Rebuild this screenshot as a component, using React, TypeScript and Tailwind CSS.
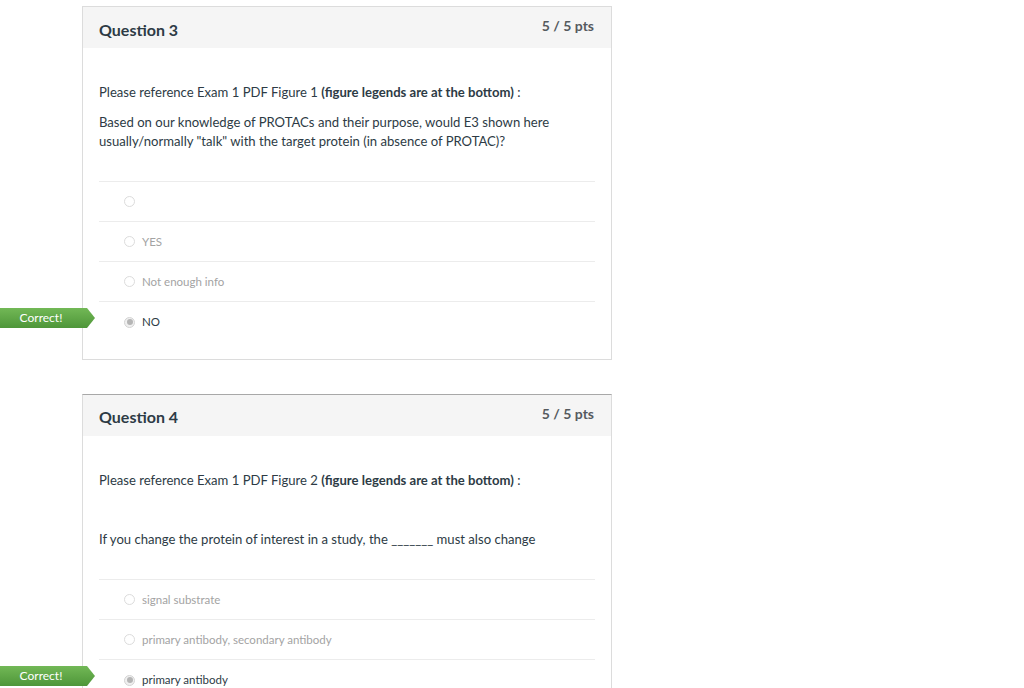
import React from "react";

type Opt = { label: string; selected?: boolean };

function Radio({ selected }: { selected?: boolean }) {
  if (selected) {
    return (
      <span className="flex h-[11px] w-[11px] items-center justify-center rounded-full border border-[#d4d4d4] bg-[#f0f0f0]">
        <span className="h-[6px] w-[6px] rounded-full bg-[#b5b5b5]" />
      </span>
    );
  }
  return <span className="h-[11px] w-[11px] rounded-full border border-[#dcdcdc] bg-white" />;
}

function Badge() {
  return (
    <div className="absolute left-[-99px] top-[6px] flex h-[20px] w-[95px] items-center bg-gradient-to-b from-[#72b856] to-[#4e9639] [clip-path:polygon(0_0,87px_0,100%_50%,87px_100%,0_100%)]">
      <span className="w-[82px] text-center text-[12px] leading-none text-white">Correct!</span>
    </div>
  );
}

function Card({
  title,
  darkTop,
  children,
  options,
}: {
  title: string;
  darkTop?: boolean;
  children: React.ReactNode;
  options: Opt[];
}) {
  return (
    <div
      className={`w-[530px] border border-[#dcdcdc] bg-white ${darkTop ? "border-t-[#a8a8a8]" : ""}`}
    >
      <div className="flex h-[41px] items-start justify-between bg-[#f5f5f5] pl-4 pr-[17px]">
        <div
          className={`${darkTop ? "pt-[12px]" : "pt-[13px]"} text-[16px] font-bold leading-[20px] text-[#2d3b45]`}
        >
          {title}
        </div>
        <div className="pt-[9px] text-[14px] font-bold leading-[20px] text-[#555a5e]">5 / 5 pts</div>
      </div>
      <div className="px-4 pt-[35px] text-[13.1px] leading-[19px] text-[#2d3b45]">{children}</div>
      <div className="mx-[16px] mt-[30px] pb-[17px]">
        {options.map((o, i) => (
          <div
            key={i}
            className={`relative flex items-center gap-[7px] border-t border-[#ececec] pl-[25px] text-[11.5px] ${
              i === options.length - 1 ? "h-[41px]" : "h-10"
            }`}
          >
            {o.selected && <Badge />}
            <Radio selected={o.selected} />
            <span className={o.selected ? "text-[#2d3b45]" : "text-[#a3a3a3]"}>{o.label}</span>
          </div>
        ))}
      </div>
    </div>
  );
}

export default function App() {
  return (
    <div
      className="relative min-h-[688px] w-[1024px] overflow-hidden bg-white pl-[82px] pt-[6px]"
      style={{ fontFamily: "Lato, 'Liberation Sans', sans-serif" }}
    >
      <Card
        title="Question 3"
        options={[
          { label: "" },
          { label: "YES" },
          { label: "Not enough info" },
          { label: "NO", selected: true },
        ]}
      >
        <p>
          Please reference Exam 1 PDF Figure 1 <b>(figure legends are at the bottom)</b> :
        </p>
        <p className="mt-[11px] w-[470px]">
          Based on our knowledge of PROTACs and their purpose, would E3 shown here usually/normally "talk"
          with the target protein (in absence of PROTAC)?
        </p>
      </Card>
      <div className="h-[34px]" />
      <Card
        title="Question 4"
        darkTop
        options={[
          { label: "signal substrate" },
          { label: "primary antibody, secondary antibody" },
          { label: "primary antibody", selected: true },
        ]}
      >
        <p>
          Please reference Exam 1 PDF Figure 2 <b>(figure legends are at the bottom)</b> :
        </p>
        <p className="mt-[40px]">If you change the protein of interest in a study, the _______ must also change</p>
      </Card>
    </div>
  );
}
